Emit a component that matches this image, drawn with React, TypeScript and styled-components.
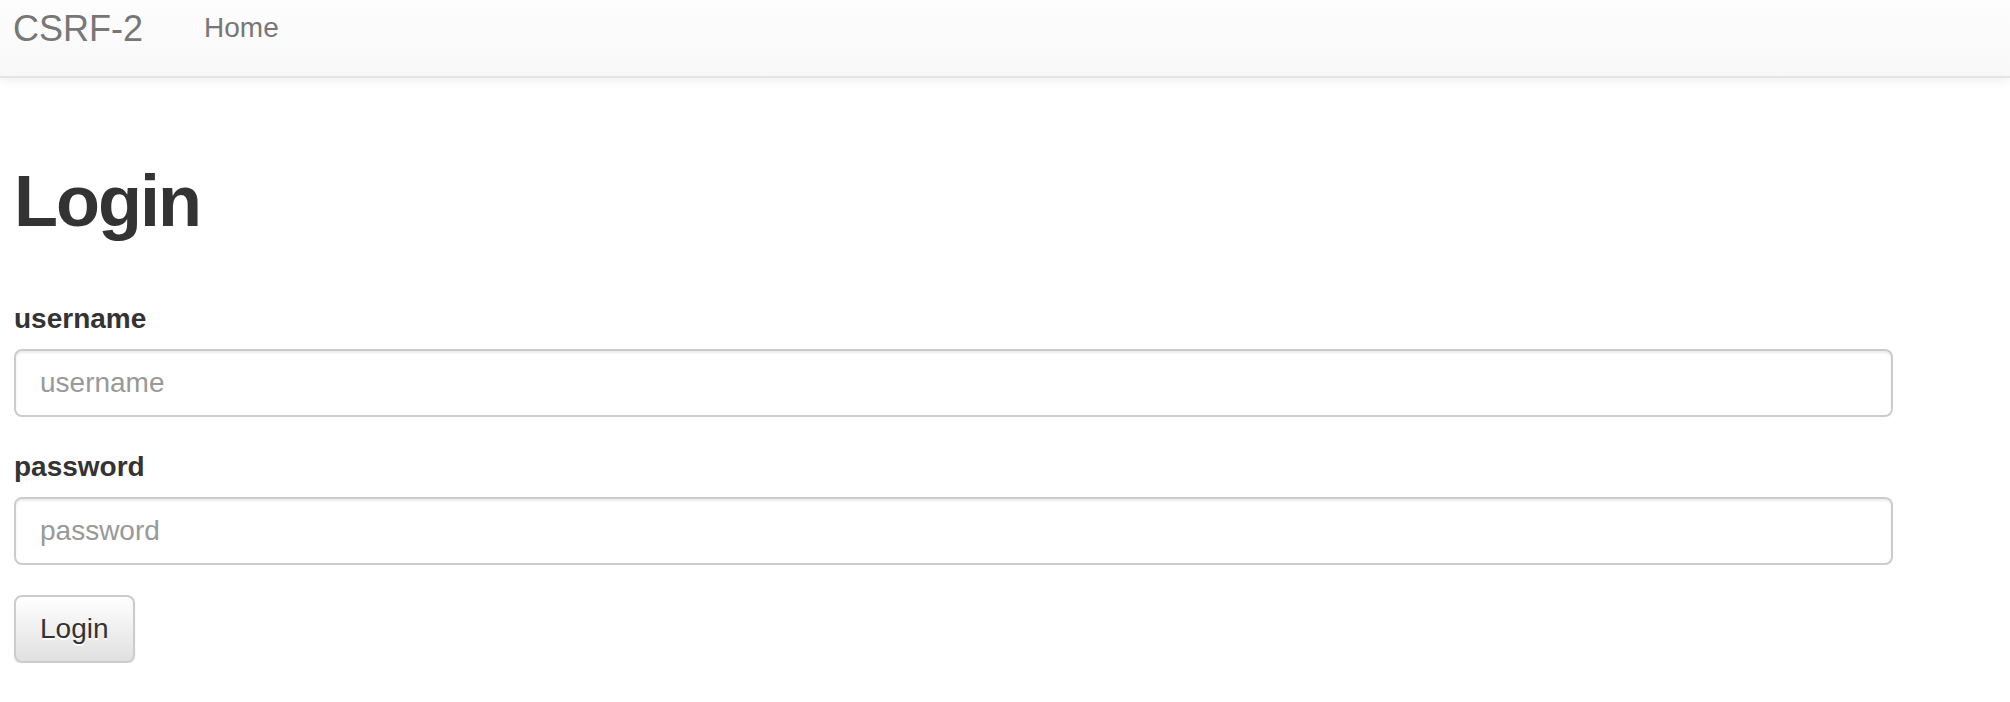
import styled, { createGlobalStyle } from "styled-components";

const GlobalStyle = createGlobalStyle`
  html, body {
    margin: 0;
    padding: 0;
    background: #fff;
  }
  body {
    font-family: "Liberation Sans", Arial, Helvetica, sans-serif;
    color: #333;
  }
`;

const Navbar = styled.nav`
  height: 78px;
  box-sizing: border-box;
  border-bottom: 2px solid #e4e4e4;
  background: linear-gradient(to bottom, #fdfdfd 0%, #f8f8f8 100%);
  box-shadow: 0 2px 10px rgba(0, 0, 0, 0.075);
  display: flex;
  align-items: flex-start;
  padding: 9px 0 0 13px;
`;

const Brand = styled.a`
  font-size: 36px;
  line-height: 40px;
  color: #777;
  text-decoration: none;
  margin-right: 61px;
`;

const NavLink = styled.a`
  font-size: 28px;
  line-height: 40px;
  color: #777;
  text-decoration: none;
  margin-top: -1px;
`;

const Container = styled.main`
  padding: 0 14px;
`;

const Title = styled.h1`
  font-size: 72px;
  font-weight: bold;
  letter-spacing: -2px;
  line-height: 79px;
  margin: 84px 0 58px;
  color: #333;
`;

const Form = styled.form`
  width: 1879px;
`;

const Group = styled.div`
  margin-bottom: 30px;
`;

const Label = styled.label`
  display: block;
  font-size: 28px;
  font-weight: bold;
  line-height: 40px;
  margin-bottom: 10px;
  color: #333;
`;

const Input = styled.input`
  display: block;
  width: 100%;
  height: 68px;
  box-sizing: border-box;
  padding: 12px 24px;
  font-family: inherit;
  font-size: 28px;
  color: #555;
  background: #fff;
  border: 2px solid #ccc;
  border-radius: 8px;
  box-shadow: inset 0 2px 2px rgba(0, 0, 0, 0.075);
  outline: none;

  &::placeholder {
    color: #999;
  }
`;

const Button = styled.button`
  height: 68px;
  padding: 0 24px;
  font-family: inherit;
  font-size: 28px;
  line-height: 40px;
  color: #333;
  text-shadow: 0 2px 0 #fff;
  background: linear-gradient(to bottom, #fff 0%, #e0e0e0 100%);
  border: 2px solid #ccc;
  border-radius: 8px;
  box-shadow: inset 0 2px 0 rgba(255, 255, 255, 0.15),
    0 2px 2px rgba(0, 0, 0, 0.075);
  cursor: pointer;
`;

const App = () => {
  return (
    <>
      <GlobalStyle />
      <Navbar>
        <Brand href="#">CSRF-2</Brand>
        <NavLink href="#">Home</NavLink>
      </Navbar>
      <Container>
        <Title>Login</Title>
        <Form onSubmit={(e) => e.preventDefault()}>
          <Group>
            <Label htmlFor="username">username</Label>
            <Input id="username" type="text" placeholder="username" />
          </Group>
          <Group>
            <Label htmlFor="password">password</Label>
            <Input id="password" type="password" placeholder="password" />
          </Group>
          <Button type="submit">Login</Button>
        </Form>
      </Container>
    </>
  );
};

export default App;
